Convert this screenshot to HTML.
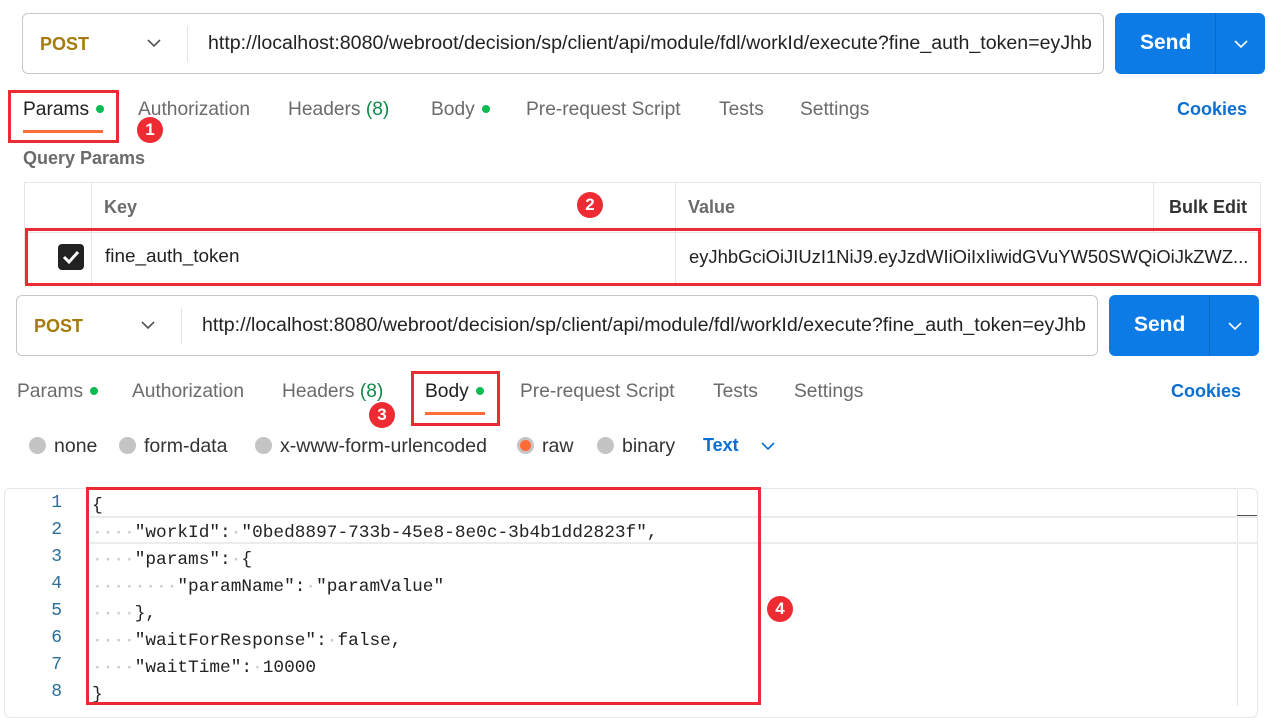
<!DOCTYPE html>
<html><head><meta charset="utf-8"><style>
*{margin:0;padding:0;box-sizing:border-box}
body{width:1268px;height:706px;background:#fff;position:relative;overflow:hidden;font-family:"Liberation Sans",sans-serif;color:#212121}
.a{position:absolute;white-space:nowrap}
.bar{position:absolute;height:61px;border:1px solid #c8c8c8;border-radius:6px;background:#fff}
.post{position:absolute;font-weight:bold;color:#a57a0b;font-size:18px}
.url{position:absolute;font-size:19.6px;color:#222}
.send{position:absolute;width:150px;height:61px;background:#0c7be6;border-radius:6px;color:#fff}
.send b{position:absolute;left:25px;top:18px;font-size:21px}
.send i{position:absolute;left:100px;top:0;width:1px;height:61px;background:#0a66c2}
.tab{position:absolute;font-size:19.2px;color:#6b6b6b}
.dot{display:inline-block;width:8px;height:8px;border-radius:50%;background:#0cbb52;margin-left:7px;vertical-align:2px}
.green{color:#0c8a48}
.red{position:absolute;border:3px solid #ee2a33}
.badge{position:absolute;width:26px;height:26px;border-radius:50%;background:#ee2a33;color:#fff;font-size:17px;font-weight:bold;text-align:center;line-height:26px}
.cookies{position:absolute;color:#0b6fd1;font-weight:bold;font-size:18px}
.radio{position:absolute;font-size:19.5px;color:#333}
.radio s{display:inline-block;width:17px;height:17px;border-radius:50%;background:#c4c4c4;vertical-align:-2px;margin-right:8px}
.ln{position:absolute;left:30px;width:32px;text-align:right;font-family:"Liberation Mono",monospace;font-size:18px;color:#2a6f97}
.code{position:absolute;left:92px;font-family:"Liberation Mono",monospace;font-size:17.8px;color:#222;white-space:pre}
.d{color:#c8c8c8}
</style></head><body>

<!-- bar 1 -->
<div class="bar" style="left:22px;top:13px;width:1082px"></div>
<div class="post" style="left:40px;top:34px">POST</div>
<svg class="a" style="left:147px;top:38px" width="14" height="10"><path d="M1 2 L7 8 L13 2" stroke="#555" stroke-width="1.6" fill="none"/></svg>
<div class="a" style="left:187px;top:26px;width:1px;height:36px;background:#e4e4e4"></div>
<div class="url" style="left:208px;top:32px">http://localhost:8080/webroot/decision/sp/client/api/module/fdl/workId/execute?fine_auth_token=eyJhb</div>
<div class="send" style="left:1115px;top:13px"><b>Send</b><i></i><svg class="a" style="left:118px;top:26px" width="16" height="10"><path d="M2 2 L8 8 L14 2" stroke="#fff" stroke-width="1.6" fill="none"/></svg></div>

<div class="tab" style="left:23px;top:99px;color:#212121">Params<span class="dot"></span></div>
<div class="a" style="left:23px;top:130px;width:80px;height:3px;background:#ff6c37"></div>
<div class="red" style="left:8px;top:90px;width:111px;height:53px"></div>
<div class="badge" style="left:137px;top:117px">1</div>
<div class="tab" style="left:138px;top:99px">Authorization</div>
<div class="tab" style="left:288px;top:99px">Headers <span class="green">(8)</span></div>
<div class="tab" style="left:431px;top:99px">Body<span class="dot"></span></div>
<div class="tab" style="left:526px;top:99px">Pre-request Script</div>
<div class="tab" style="left:719px;top:99px">Tests</div>
<div class="tab" style="left:800px;top:99px">Settings</div>
<div class="cookies" style="left:1177px;top:99px">Cookies</div>

<div class="a" style="left:23px;top:148px;font-size:18px;font-weight:bold;color:#6b6b6b">Query Params</div>
<div class="a" style="left:24px;top:182px;width:1237px;height:102px;border:1px solid #e6e6e6"></div>
<div class="a" style="left:24px;top:232px;width:1237px;height:1px;background:#e6e6e6"></div>
<div class="a" style="left:91px;top:182px;width:1px;height:102px;background:#e6e6e6"></div>
<div class="a" style="left:675px;top:182px;width:1px;height:102px;background:#e6e6e6"></div>
<div class="a" style="left:1153px;top:182px;width:1px;height:50px;background:#e6e6e6"></div>
<div class="a" style="left:104px;top:197px;font-size:18px;font-weight:bold;color:#6b6b6b">Key</div>
<div class="a" style="left:688px;top:197px;font-size:18px;font-weight:bold;color:#6b6b6b">Value</div>
<div class="a" style="left:1169px;top:197px;font-size:18px;font-weight:bold;color:#333">Bulk Edit</div>
<div class="badge" style="left:577px;top:192px">2</div>
<div class="red" style="left:25px;top:228px;width:1236px;height:58px"></div>
<div class="a" style="left:58px;top:244px;width:26px;height:26px;border-radius:4px;background:#222"></div>
<svg class="a" style="left:58px;top:244px" width="26" height="26"><path d="M6 13 L11 18 L20 8" stroke="#fff" stroke-width="3" fill="none"/></svg>
<div class="a" style="left:105px;top:246px;font-size:18.9px">fine_auth_token</div>
<div class="a" style="left:689px;top:246px;font-size:18.4px">eyJhbGciOiJIUzI1NiJ9.eyJzdWIiOiIxIiwidGVuYW50SWQiOiJkZWZ...</div>

<!-- bar 2 -->
<div class="bar" style="left:16px;top:295px;width:1082px"></div>
<div class="post" style="left:34px;top:316px">POST</div>
<svg class="a" style="left:141px;top:320px" width="14" height="10"><path d="M1 2 L7 8 L13 2" stroke="#555" stroke-width="1.6" fill="none"/></svg>
<div class="a" style="left:181px;top:308px;width:1px;height:36px;background:#e4e4e4"></div>
<div class="url" style="left:202px;top:314px">http://localhost:8080/webroot/decision/sp/client/api/module/fdl/workId/execute?fine_auth_token=eyJhb</div>
<div class="send" style="left:1109px;top:295px"><b>Send</b><i></i><svg class="a" style="left:118px;top:26px" width="16" height="10"><path d="M2 2 L8 8 L14 2" stroke="#fff" stroke-width="1.6" fill="none"/></svg></div>

<div class="tab" style="left:17px;top:381px">Params<span class="dot"></span></div>
<div class="tab" style="left:132px;top:381px">Authorization</div>
<div class="tab" style="left:282px;top:381px">Headers <span class="green">(8)</span></div>
<div class="tab" style="left:425px;top:381px;color:#212121">Body<span class="dot"></span></div>
<div class="a" style="left:425px;top:412px;width:60px;height:3px;background:#ff6c37"></div>
<div class="red" style="left:411px;top:371px;width:89px;height:55px"></div>
<div class="badge" style="left:369px;top:402px">3</div>
<div class="tab" style="left:520px;top:381px">Pre-request Script</div>
<div class="tab" style="left:713px;top:381px">Tests</div>
<div class="tab" style="left:794px;top:381px">Settings</div>
<div class="cookies" style="left:1171px;top:381px">Cookies</div>

<div class="radio" style="left:29px;top:435px"><s></s>none</div>
<div class="radio" style="left:119px;top:435px"><s></s>form-data</div>
<div class="radio" style="left:255px;top:435px"><s></s>x-www-form-urlencoded</div>
<div class="radio" style="left:517px;top:435px"><s style="background:#ff6c37;border:3px solid #c4c4c4"></s>raw</div>
<div class="radio" style="left:597px;top:435px"><s></s>binary</div>
<div class="a" style="left:703px;top:435px;font-size:18px;font-weight:bold;color:#0b6fd1">Text</div>
<svg class="a" style="left:761px;top:441px" width="14" height="10"><path d="M1 2 L7 8 L13 2" stroke="#0b6fd1" stroke-width="1.6" fill="none"/></svg>

<!-- editor -->
<div class="a" style="left:4px;top:488px;width:1254px;height:230px;border:1px solid #e6e6e6;border-radius:6px"></div>
<div class="a" style="left:1237px;top:490px;width:1px;height:216px;background:#e6e6e6"></div>
<div class="a" style="left:1237px;top:515px;width:20px;height:3px;background:#555"></div>
<div class="a" style="left:90px;top:516px;width:1167px;height:28px;border:2px solid #ececec;border-right:none;border-left:none"></div>
<div class="ln" style="top:493px">1</div>
<div class="ln" style="top:520px">2</div>
<div class="ln" style="top:547px">3</div>
<div class="ln" style="top:574px">4</div>
<div class="ln" style="top:601px">5</div>
<div class="ln" style="top:628px">6</div>
<div class="ln" style="top:655px">7</div>
<div class="ln" style="top:682px">8</div>
<div class="code" style="top:493px;line-height:27px">{
<span class="d">····</span>"workId":<span class="d">·</span>"0bed8897-733b-45e8-8e0c-3b4b1dd2823f",
<span class="d">····</span>"params":<span class="d">·</span>{
<span class="d">········</span>"paramName":<span class="d">·</span>"paramValue"
<span class="d">····</span>},
<span class="d">····</span>"waitForResponse":<span class="d">·</span>false,
<span class="d">····</span>"waitTime":<span class="d">·</span>10000
}</div>
<div class="red" style="left:86px;top:487px;width:675px;height:218px"></div>
<div class="badge" style="left:767px;top:596px">4</div>
</body></html>
